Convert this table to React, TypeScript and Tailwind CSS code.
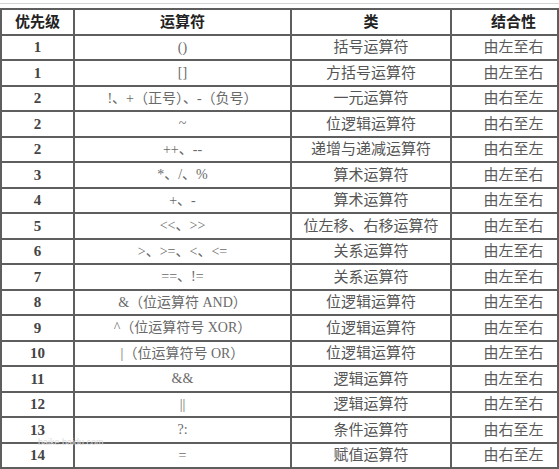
import React from "react";

const rows: [string, string, string, string][] = [
  ["1", "()", "括号运算符", "由左至右"],
  ["1", "[]", "方括号运算符", "由左至右"],
  ["2", "!、+（正号）、-（负号）", "一元运算符", "由右至左"],
  ["2", "~", "位逻辑运算符", "由右至左"],
  ["2", "++、--", "递增与递减运算符", "由右至左"],
  ["3", "*、/、%", "算术运算符", "由左至右"],
  ["4", "+、-", "算术运算符", "由左至右"],
  ["5", "<<、>>", "位左移、右移运算符", "由左至右"],
  ["6", ">、>=、<、<=", "关系运算符", "由左至右"],
  ["7", "==、!=", "关系运算符", "由左至右"],
  ["8", "&（位运算符 AND）", "位逻辑运算符", "由左至右"],
  ["9", "^（位运算符号 XOR）", "位逻辑运算符", "由左至右"],
  ["10", "|（位运算符号 OR）", "位逻辑运算符", "由左至右"],
  ["11", "&&", "逻辑运算符", "由左至右"],
  ["12", "||", "逻辑运算符", "由左至右"],
  ["13", "?:", "条件运算符", "由右至左"],
  ["14", "=", "赋值运算符", "由右至左"],
];

const font = "font-['Liberation_Serif','Noto_Sans_CJK_SC',serif]";

export default function App() {
  return (
    <div className={`relative w-[559px] h-[469px] bg-white overflow-hidden ${font}`}>
      <div className="h-[3px]" />
      <div className="h-px bg-[#d4d4d4]" />
      <div className="h-[4px]" />
      <div className="grid grid-cols-[71px_215px_158px_105px] gap-[2px] p-[2px] bg-[#5e5e5e] w-[559px] auto-rows-[23.5px]">
        {["优先级", "运算符", "类", "结合性"].map((h, i) => (
          <div
            key={h}
            className={`bg-white flex items-center justify-center text-[15px] font-bold text-[#222] ${i === 3 ? "pl-[18px]" : ""}`}
          >
            {h}
          </div>
        ))}
        {rows.map((r, idx) => (
          <React.Fragment key={idx}>
            <div className="bg-white flex items-center justify-center text-[15px] font-bold text-[#444]">
              {r[0]}
            </div>
            <div className="bg-white flex items-center justify-center text-[14px] text-[#6a6a6a]">
              {r[1]}
            </div>
            <div className="bg-white flex items-center justify-center text-[15px] text-[#555]">
              {r[2]}
            </div>
            <div className="bg-white flex items-center justify-center pl-[18px] text-[15px] text-[#5a5a5a]">
              {r[3]}
            </div>
          </React.Fragment>
        ))}
      </div>
      <div className="absolute left-[38px] top-[436px] text-[9px] text-[#dcdcdc] font-['Liberation_Sans',sans-serif]">
        baike.baidu.com
      </div>
    </div>
  );
}
